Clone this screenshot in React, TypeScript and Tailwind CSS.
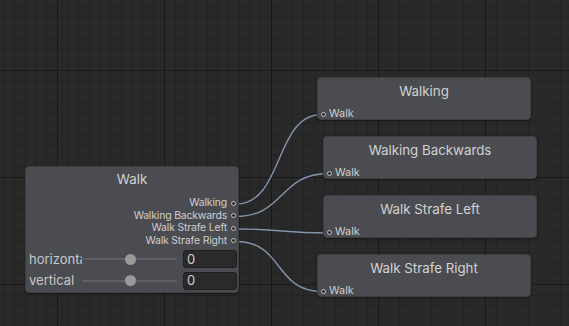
import React from "react";

const W = 569;
const H = 326;
const STEP = 10.7;

function GridBg() {
  const xs: { p: number; major: boolean }[] = [];
  for (let k = 0; ; k++) {
    const x = 3.8 + STEP * k;
    if (x > W) break;
    xs.push({ p: Math.floor(x) + 0.5, major: (k - 5) % 10 === 0 });
  }
  const ys: { p: number; major: boolean }[] = [];
  for (let k = 0; ; k++) {
    const y = 6.1 + STEP * k;
    if (y > H) break;
    ys.push({ p: Math.floor(y) + 0.5, major: (k - 6) % 10 === 0 });
  }
  return (
    <svg className="absolute inset-0" width={W} height={H}>
      {xs.filter((l) => !l.major).map((l, i) => (
        <line key={"vx" + i} x1={l.p} y1={0} x2={l.p} y2={H} stroke="#232323" strokeWidth={1} />
      ))}
      {ys.filter((l) => !l.major).map((l, i) => (
        <line key={"hy" + i} x1={0} y1={l.p} x2={W} y2={l.p} stroke="#232323" strokeWidth={1} />
      ))}
      {xs.filter((l) => l.major).map((l, i) => (
        <line key={"VX" + i} x1={l.p} y1={0} x2={l.p} y2={H} stroke="#191919" strokeWidth={1} />
      ))}
      {ys.filter((l) => l.major).map((l, i) => (
        <line key={"HY" + i} x1={0} y1={l.p} x2={W} y2={l.p} stroke="#191919" strokeWidth={1} />
      ))}
    </svg>
  );
}

function wire(x1: number, y1: number, x2: number, y2: number) {
  const t = 48;
  return `M ${x1} ${y1} C ${x1 + t} ${y1}, ${x2 - t} ${y2}, ${x2} ${y2}`;
}

function Edges() {
  return (
    <svg className="absolute inset-0" width={W} height={H}>
      <g fill="none" stroke="#8194ab" strokeWidth={1.4}>
        <path d={wire(236, 204, 322, 114.5)} />
        <path d={wire(236, 216.5, 328, 173.5)} />
        <path d={wire(236, 229, 328, 233)} />
        <path d={wire(236, 241.5, 322, 291.5)} />
      </g>
    </svg>
  );
}

function Port() {
  return <div className="w-[5px] h-[5px] rounded-full border border-[#c4c4c4] bg-[#2b2b2b] shrink-0" />;
}

function SmallNode({ title, className }: { title: string; className: string }) {
  return (
    <div
      className={
        "absolute w-[214px] h-[43px] rounded-[4px] bg-[#4a4c51] border border-[#3d3f43] shadow-[0_1px_2px_rgba(0,0,0,0.45)] flex flex-col " +
        className
      }
    >
      <div className="shrink-0 h-[26px] pt-[1px] flex items-center justify-center text-[13.3px] text-[#d2d2d2] leading-none">
        {title}
      </div>
      <div className="shrink-0 flex items-center h-[11px] mt-[4.5px] pl-[3px] gap-[3px] text-[10.8px] text-[#cfcfcf] leading-none">
        <Port />
        <span>Walk</span>
      </div>
    </div>
  );
}

function OutRow({ label }: { label: string }) {
  return (
    <div className="h-[12.5px] flex items-center justify-end gap-[4px] pr-[2px] text-[10.4px] tracking-[-0.15px] leading-none text-[#cfcfcf]">
      <span>{label}</span>
      <Port />
    </div>
  );
}

function SliderRow({ label, clip }: { label: string; clip?: boolean }) {
  return (
    <div className="flex items-center h-[18px]">
      <div
        className={
          "w-[53px] ml-[3px] whitespace-nowrap text-[13px] leading-none text-[#c8c8c8] " +
          (clip ? "overflow-hidden" : "")
        }
      >
        {label}
      </div>
      <div className="relative w-[94px] ml-[1px] h-[11px] flex items-center">
        <div className="w-full h-[2px] bg-[#5f6166]" />
        <div className="absolute left-[41.5px] top-0 w-[11px] h-[11px] rounded-full bg-[#9a9a9b]" />
      </div>
      <div className="ml-[6px] w-[54px] h-[18px] rounded-[3px] bg-[#2a2a2a] border border-[#1f1f1f] flex items-center pl-[3px] text-[13px] leading-none text-[#d0d0d0]">
        0
      </div>
    </div>
  );
}

export default function App() {
  return (
    <div
      className="relative w-[569px] h-[326px] overflow-hidden bg-[#292929]"
      style={{ fontFamily: "Inter, 'Noto Sans', sans-serif" }}
    >
      <GridBg />
      <Edges />

      <div className="absolute left-[25px] top-[166px] w-[214px] h-[127px] rounded-[4px] bg-[#4a4c51] border border-[#3d3f43] shadow-[0_1px_2px_rgba(0,0,0,0.45)] flex flex-col">
        <div className="h-[26px] flex items-center justify-center text-[13.3px] text-[#d2d2d2] leading-none">
          Walk
        </div>
        <div className="mt-[4px] flex flex-col">
          <OutRow label="Walking" />
          <OutRow label="Walking Backwards" />
          <OutRow label="Walk Strafe Left" />
          <OutRow label="Walk Strafe Right" />
        </div>
        <div className="mt-[3px] flex flex-col gap-[3.5px]">
          <SliderRow label="horizontal" clip />
          <SliderRow label="vertical" />
        </div>
      </div>

      <SmallNode title="Walking" className="left-[317px] top-[77px]" />
      <SmallNode title="Walking Backwards" className="left-[323px] top-[136px]" />
      <SmallNode title="Walk Strafe Left" className="left-[323px] top-[195px]" />
      <SmallNode title="Walk Strafe Right" className="left-[317px] top-[254px]" />
    </div>
  );
}
